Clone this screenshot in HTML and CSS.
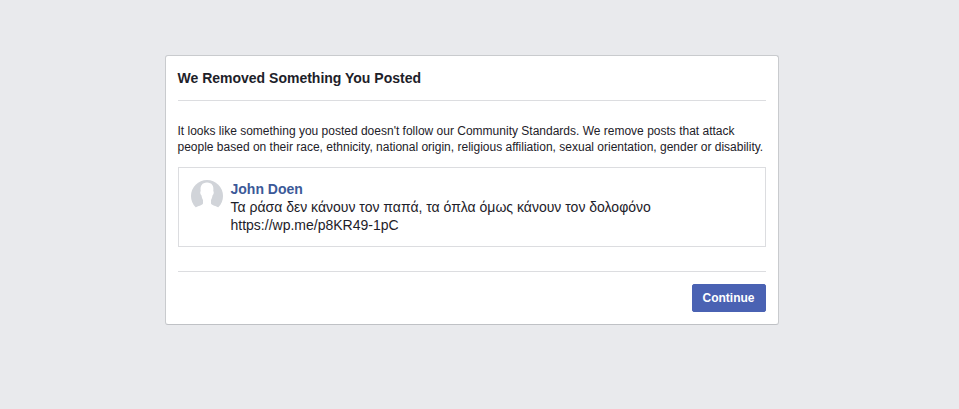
FILE: index.html
```html
<!DOCTYPE html>
<html lang="en">
<head>
  <meta charset="UTF-8" />
  <meta name="viewport" content="width=device-width, initial-scale=1.0"/>
  <title>We Removed Something You Posted</title>
  <link rel="stylesheet" href="styles.css">
</head>
<body>

  <main class="dialog">
    <h2 class="dialog-title">We Removed Something You Posted</h2>

    <div class="dialog-body">
      <p class="reason">It looks like something you posted doesn't follow our Community Standards. We remove posts that attack people based on their race, ethnicity, national origin, religious affiliation, sexual orientation, gender or disability.</p>

      <div class="post">
        <svg class="avatar" viewBox="0 0 32 32" aria-hidden="true">
          <circle cx="16" cy="16" r="16" fill="#d1d4d9"/>
          <path d="M16 2.500C11 2.500 9 6 9.700 11C8.800 12 9.300 14.500 10.500 15.500C10.800 18 11.500 19 12 20V23.500C11 25.500 7 26 4.500 27.500V32H27.500V27.500C25 26 21 25.500 20 23.500V20C20.500 19 21.200 18 21.500 15.500C22.700 14.500 23.200 12 22.300 11C23 6 21 2.500 16 2.500Z" fill="#fff"/>
        </svg>
        <div class="post-content">
          <a class="author" href="#">John Doen</a>
          <p lang="el">Τα ράσα δεν κάνουν τον παπά, τα όπλα όμως κάνουν τον δολοφόνο</p>
          <p>https://wp.me/p8KR49-1pC</p>
        </div>
      </div>
    </div>

    <div class="dialog-footer">
      <button class="continue" type="button">Continue</button>
    </div>
  </main>

</body>
</html>
```
FILE: styles.css
```css
body {
  background-color: #e9eaed;
  font-family: "Liberation Sans", Arial, sans-serif;
  font-size: 12px;
  line-height: 16px;
  color: #1d2129;
  margin: 0;
  padding: 55px 24px 55px 8px;
}

p {
  margin: 0;
}

.dialog {
  background-color: white;
  box-sizing: border-box;
  max-width: 614px;
  margin: 0 auto;
  padding: 0 12px 12px;
  border: 1px solid #c9cbce;
  border-bottom-color: #bfc1c5;
  border-radius: 3px;
}

.dialog-title {
  margin: 0;
  padding: 13px 0;
  font-size: 14px;
  line-height: 18px;
  border-bottom: 1px solid #dcdde0;
}

.dialog-body {
  padding: 22px 0 24px;
}

.post {
  display: flex;
  gap: 8px;
  margin-top: 12px;
  padding: 12px;
  border: 1px solid #dcdde0;
}

.avatar {
  flex: none;
  width: 32px;
  height: 32px;
}

.post-content {
  font-size: 14px;
  line-height: 18px;
}

.author {
  color: #3b5998;
  font-weight: bold;
  text-decoration: none;
}

.author:hover {
  text-decoration: underline;
}

.dialog-footer {
  display: flex;
  justify-content: flex-end;
  padding-top: 12px;
  border-top: 1px solid #dcdde0;
}

.continue {
  padding: 0 10px;
  font-family: inherit;
  font-size: 12px;
  font-weight: bold;
  line-height: 26px;
  color: white;
  background-color: #4a62b3;
  border: 1px solid #4a62b3;
  border-radius: 2px;
  cursor: pointer;
}
```
